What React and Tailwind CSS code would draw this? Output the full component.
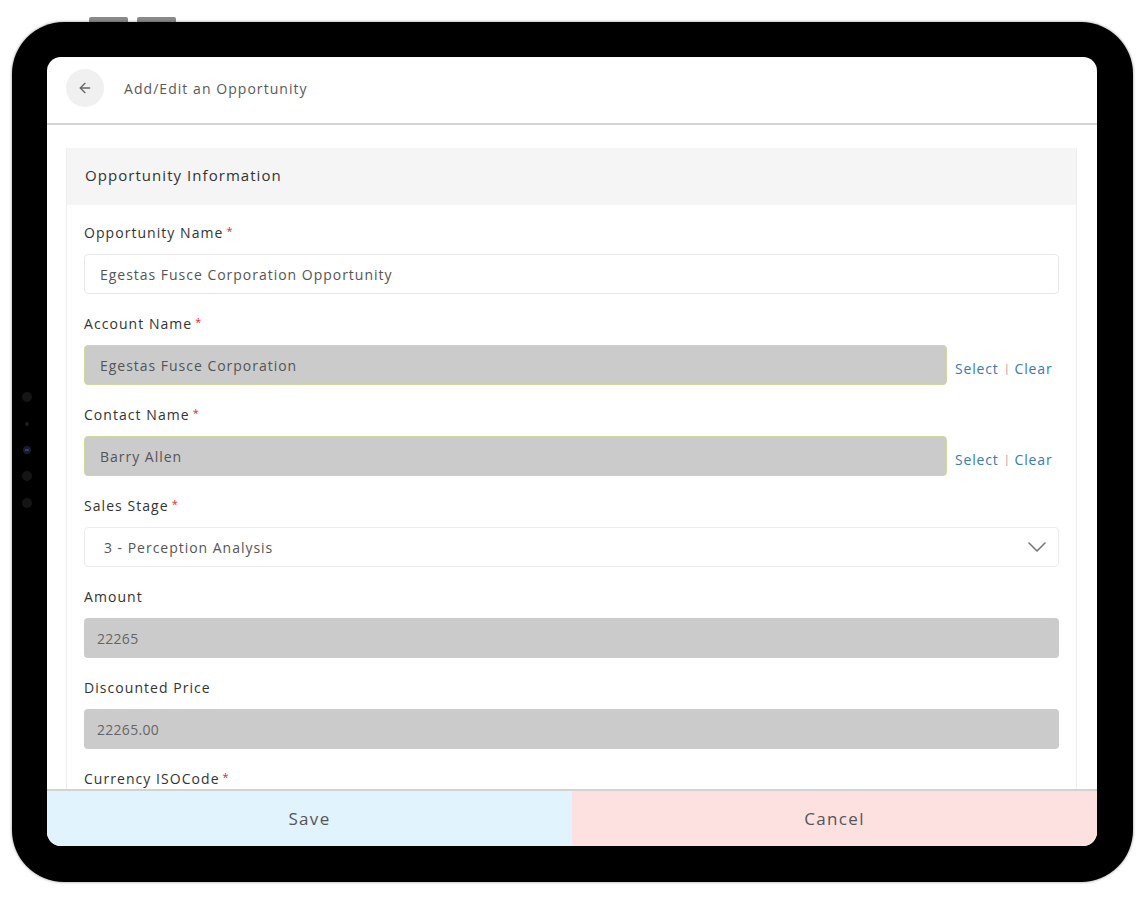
import React from "react";

const font = { fontFamily: '"Open Sans", "Liberation Sans", sans-serif' };

function Label({ children, req }) {
  return (
    <div className="h-5 flex items-center text-[14px] tracking-[0.075em] text-[#333] leading-5">
      <span>{children}</span>
      {req && <span className="ml-[3px] text-[#e3262b] text-[11px] -mt-[5px]">*</span>}
    </div>
  );
}

function Field({ label, req, children }) {
  return (
    <div className="flex flex-col gap-[11px] mb-5">
      <Label req={req}>{label}</Label>
      {children}
    </div>
  );
}

function Lookup({ value }) {
  return (
    <div className="flex items-center">
      <div className="flex-1 h-10 rounded-[4px] bg-[#cbcbcb] border border-[#cfd79c] flex items-center pl-[15px] text-[14px] tracking-[0.07em] text-[#555]">
        {value}
      </div>
      <div className="w-[112px] pl-2 pt-[6px] text-[14px] tracking-[0.06em] text-[#3a78b6] flex items-center">
        <span>Select</span>
        <span className="ml-[5px] mr-[4px] text-[#999] text-[11px]">|</span>
        <span>Clear</span>
      </div>
    </div>
  );
}

export default function App() {
  return (
    <div className="w-[1141px] h-[900px] bg-white relative overflow-hidden" style={font}>
      {/* top hardware buttons */}
      <div className="absolute left-[89px] top-[17px] w-[39px] h-[6px] rounded-t-[2px] bg-[#8a8a8a]" />
      <div className="absolute left-[137px] top-[17px] w-[39px] h-[6px] rounded-t-[2px] bg-[#8a8a8a]" />

      <div className="absolute left-[12px] top-[22px] w-[1121px] h-[860px] rounded-[52px] bg-black shadow-[0_0_3px_rgba(0,0,0,0.45)] pt-[35px] pl-[35px] pr-[36px] pb-[36px]">
        {/* side sensors */}
        <div className="absolute left-[10px] top-[370px] flex flex-col items-center gap-[17px]">
          <div className="w-[10px] h-[10px] rounded-full bg-[#151515]" />
          <div className="w-[4px] h-[4px] rounded-full bg-[#1c1c1c] my-[3px]" />
          <div className="w-[8px] h-[8px] rounded-full bg-[#1a1a2e] flex items-center justify-center">
            <div className="w-[4px] h-[2px] bg-[#3b3b6e]" />
          </div>
          <div className="w-[10px] h-[10px] rounded-full bg-[#151515]" />
          <div className="w-[10px] h-[10px] rounded-full bg-[#151515]" />
        </div>

        <div className="w-full h-full bg-white rounded-[14px] overflow-hidden flex flex-col">
          {/* header */}
          <div className="h-[68px] shrink-0 flex items-center pl-[19px] pb-[4px] border-b-2 border-[#d4d4d4]">
            <div className="w-[38px] h-[38px] rounded-full bg-[#f0f0f0] flex items-center justify-center">
              <svg width="16" height="16" viewBox="0 0 24 24" fill="none" stroke="#666" strokeWidth="2" strokeLinecap="round" strokeLinejoin="round">
                <path d="M19 12H5" />
                <path d="M12 19l-7-7 7-7" />
              </svg>
            </div>
            <div className="ml-[20px] text-[14px] tracking-[0.075em] text-[#5a5a5a]">Add/Edit an Opportunity</div>
          </div>

          {/* content */}
          <div className="flex-1 overflow-hidden pt-[23px] pl-[19px] pr-[20px]">
            <div className="border-x border-[#efefef]">
              <div className="h-[57px] bg-[#f5f5f5] flex items-center pl-[18px] pb-[3px] text-[15px] tracking-[0.07em] text-[#333]">
                Opportunity Information
              </div>
              <div className="pt-[18px] px-[17px]">
                <Field label="Opportunity Name" req>
                  <div className="h-10 rounded-[4px] border border-[#e8e8e8] bg-white flex items-center pl-[15px] text-[14px] tracking-[0.07em] text-[#555]">
                    Egestas Fusce Corporation Opportunity
                  </div>
                </Field>
                <Field label="Account Name" req>
                  <Lookup value="Egestas Fusce Corporation" />
                </Field>
                <Field label="Contact Name" req>
                  <Lookup value="Barry Allen" />
                </Field>
                <Field label="Sales Stage" req>
                  <div className="h-10 rounded-[4px] border border-[#ececec] bg-white flex items-center pl-[19px] pr-[11px] text-[14px] tracking-[0.07em] text-[#555]">
                    <span className="flex-1">3 - Perception Analysis</span>
                    <svg width="20" height="12" viewBox="0 0 20 12" fill="none" stroke="#777" strokeWidth="1.6" strokeLinecap="round" strokeLinejoin="round">
                      <path d="M2 2l8 8 8-8" />
                    </svg>
                  </div>
                </Field>
                <Field label="Amount">
                  <div className="h-10 rounded-[4px] bg-[#cbcbcb] flex items-center pl-[13px] text-[14px] tracking-[0.02em] text-[#666]">
                    22265
                  </div>
                </Field>
                <Field label="Discounted Price">
                  <div className="h-10 rounded-[4px] bg-[#cbcbcb] flex items-center pl-[13px] text-[14px] tracking-[0.02em] text-[#666]">
                    22265.00
                  </div>
                </Field>
                <Field label="Currency ISOCode" req>
                  <div className="h-10 rounded-[4px] border border-[#e8e8e8] bg-white" />
                </Field>
              </div>
            </div>
          </div>

          {/* footer */}
          <div className="h-[57px] shrink-0 flex border-t-2 border-[#d2d2d2]">
            <div className="flex-1 bg-[#e1f3fd] flex items-center justify-center text-[17px] tracking-[0.08em] text-[#555]">Save</div>
            <div className="flex-1 bg-[#fde1e0] flex items-center justify-center text-[17px] tracking-[0.08em] text-[#555]">Cancel</div>
          </div>
        </div>
      </div>
    </div>
  );
}
